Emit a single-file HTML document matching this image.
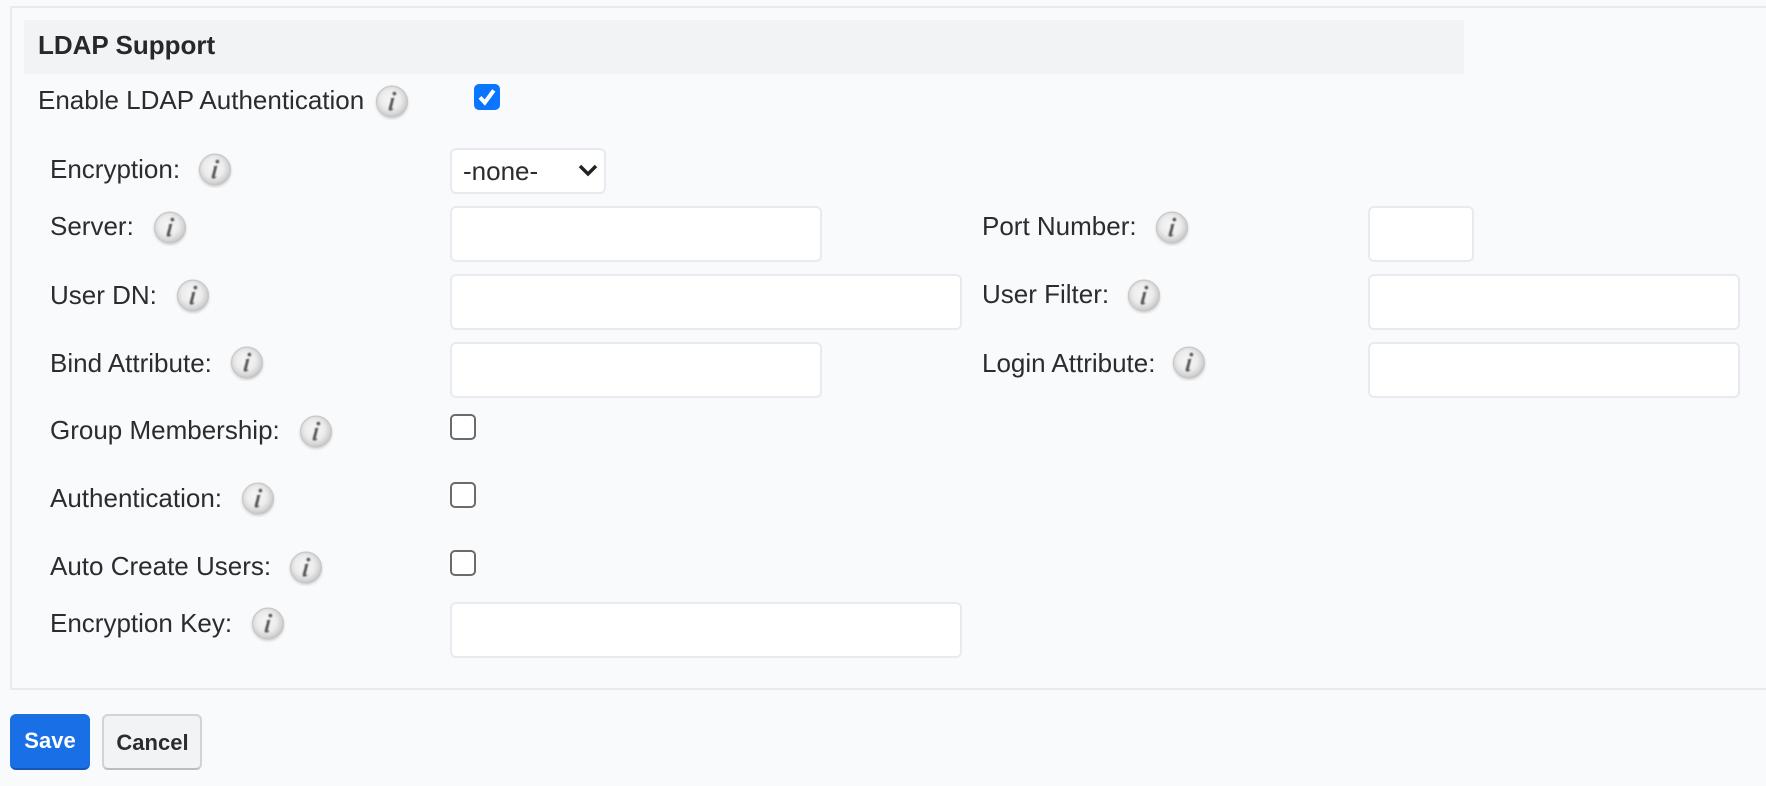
<!DOCTYPE html>
<html><head><meta charset="utf-8"><title>LDAP Support</title>
<style>
html,body{margin:0;padding:0;width:1766px;height:786px;overflow:hidden;background:#f9fafc;font-family:"Liberation Sans",sans-serif;color:#2a2c2f}
.a{position:absolute}
.panel{left:10px;top:6px;width:1780px;height:680px;border:2px solid #e6ebee;box-sizing:content-box}
.hd{left:24px;top:20px;width:1440px;height:54px;background:#f2f3f5}
.t{position:absolute;font-size:26px;line-height:30px;white-space:nowrap}
.b{font-weight:bold;color:#26282b}
input.i,.sel{position:absolute;box-sizing:border-box;background:#fff;border:2px solid #e7ebef;border-radius:6px;margin:0;padding:0;outline:none}
input.c{position:absolute;appearance:none;-webkit-appearance:none;box-sizing:border-box;width:26px;height:26px;margin:0;background:#fff;border:2px solid #6b6b6b;border-radius:5px}
svg.n{position:absolute;width:36px;height:36px;overflow:visible}
.btn{position:absolute;box-sizing:border-box;height:56px;top:714px;font:bold 22px/54px "Liberation Sans",sans-serif;text-align:center;border-radius:6px;padding:0}
</style></head><body>
<svg width="0" height="0" style="position:absolute"><defs>
<radialGradient id="g" cx="46%" cy="44%" r="58%"><stop offset="0" stop-color="#f7f7f7"/><stop offset=".55" stop-color="#ececec"/><stop offset=".85" stop-color="#d2d2d2"/><stop offset="1" stop-color="#bbbbbb"/></radialGradient>
<filter id="bl" x="-40%" y="-40%" width="180%" height="180%"><feGaussianBlur stdDeviation=".8"/></filter>
<filter id="bs" x="-30%" y="-30%" width="160%" height="160%"><feGaussianBlur stdDeviation="1.1"/></filter>
<symbol id="info" viewBox="0 0 36 36">
<circle cx="18" cy="19" r="16.5" fill="#bdbdbd" opacity=".5" filter="url(#bs)"/>
<circle cx="18" cy="17.6" r="15.5" fill="url(#g)" stroke="#c9c9c9" stroke-width="1.2"/>
<g filter="url(#bl)" fill="#555"><ellipse cx="20.4" cy="9.6" rx="1.8" ry="1.8"/><path d="M16.6 14.4 L20.4 13.6 L17.8 24 Q17.5 25.4 19.2 24.4 L19.4 25.2 Q17 27 15.6 26.6 Q14.2 26 14.8 24 L17 16 Z"/></g>
</symbol></defs></svg>

<div class="a panel"></div>
<div class="a hd"></div>
<div class="t b" style="left:38px;top:30px">LDAP Support</div>

<div class="t" style="left:38px;top:85px">Enable LDAP Authentication</div>
<svg class="n" style="left:374px;top:84px"><use href="#info"/></svg>
<div class="a" style="left:474px;top:84px;width:26px;height:26px;background:#0a75ff;border-radius:5px"><svg width="26" height="26" viewBox="0 0 26 26" style="display:block"><path d="M6 13.4 L10.8 18.6 L19.8 6.4" fill="none" stroke="#fff" stroke-width="4"/></svg></div>

<div class="t" style="left:50px;top:154px">Encryption:</div>
<svg class="n" style="left:197px;top:152px"><use href="#info"/></svg>
<div class="sel" style="left:450px;top:148px;width:156px;height:46px"></div>
<div class="t" style="left:463px;top:156px">-none-</div>
<svg class="a" style="left:577px;top:163px" width="22" height="14" viewBox="0 0 22 14"><path d="M3 3 L11 11 L19 3" fill="none" stroke="#222" stroke-width="3.4"/></svg>

<div class="t" style="left:50px;top:211px">Server:</div>
<svg class="n" style="left:152px;top:210px"><use href="#info"/></svg>
<input class="i" style="left:450px;top:206px;width:372px;height:56px">
<div class="t" style="left:982px;top:211px">Port Number:</div>
<svg class="n" style="left:1154px;top:210px"><use href="#info"/></svg>
<input class="i" style="left:1368px;top:206px;width:106px;height:56px">

<div class="t" style="left:50px;top:280px">User DN:</div>
<svg class="n" style="left:175px;top:278px"><use href="#info"/></svg>
<input class="i" style="left:450px;top:274px;width:512px;height:56px">
<div class="t" style="left:982px;top:279px">User Filter:</div>
<svg class="n" style="left:1126px;top:278px"><use href="#info"/></svg>
<input class="i" style="left:1368px;top:274px;width:372px;height:56px">

<div class="t" style="left:50px;top:348px">Bind Attribute:</div>
<svg class="n" style="left:229px;top:345px"><use href="#info"/></svg>
<input class="i" style="left:450px;top:342px;width:372px;height:56px">
<div class="t" style="left:982px;top:348px">Login Attribute:</div>
<svg class="n" style="left:1171px;top:345px"><use href="#info"/></svg>
<input class="i" style="left:1368px;top:342px;width:372px;height:56px">

<div class="t" style="left:50px;top:415px">Group Membership:</div>
<svg class="n" style="left:298px;top:414px"><use href="#info"/></svg>
<input class="c" type="checkbox" style="left:450px;top:414px">

<div class="t" style="left:50px;top:483px">Authentication:</div>
<svg class="n" style="left:240px;top:481px"><use href="#info"/></svg>
<input class="c" type="checkbox" style="left:450px;top:482px">

<div class="t" style="left:50px;top:551px">Auto Create Users:</div>
<svg class="n" style="left:288px;top:550px"><use href="#info"/></svg>
<input class="c" type="checkbox" style="left:450px;top:550px">

<div class="t" style="left:50px;top:608px">Encryption Key:</div>
<svg class="n" style="left:250px;top:606px"><use href="#info"/></svg>
<input class="i" style="left:450px;top:602px;width:512px;height:56px">

<button class="btn" style="left:10px;width:80px;background:#186fe6;color:#fff;border:0;border-bottom:2px solid #1357b8">Save</button>
<button class="btn" style="left:102px;width:100px;background:#f2f3f5;color:#2a2c2f;border:2px solid #d2d3d5;border-bottom-color:#bcbdbf;padding-left:1px">Cancel</button>
</body></html>
